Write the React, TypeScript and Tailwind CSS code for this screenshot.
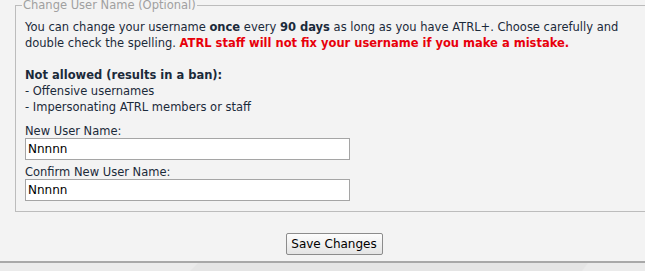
import React from 'react';

const App: React.FC = () => {
  return (
    <div className="w-[645px] h-[271px] overflow-hidden bg-[#f3f3f3] font-['DejaVu_Sans',sans-serif] text-[11.5px] text-[#1b2a3a]">
      <div className="w-[668px] h-full flex flex-col">
        {/* Настройки имени */}
        <div className="pl-[15px] h-[213px] -mt-[3px]">
          <fieldset className="border border-[#bcbcbc] w-[680px] pl-[9px] pb-[10px]">
            <legend className="-ml-[3px] px-[1px] leading-[16px] text-[#a0a0a0]">Change User Name (Optional)</legend>
            <p className="mt-[6px] w-[600px] leading-[16px]">
              You can change your username <b>once</b> every <b>90 days</b> as long as you have ATRL+. Choose carefully and double check the spelling.{' '}
              <b className="text-[#e8000b]">ATRL staff will not fix your username if you make a mistake.</b>
            </p>
            <div className="mt-[16px] leading-[16px]">
              <b>Not allowed (results in a ban):</b>
              <div>- Offensive usernames</div>
              <div>- Impersonating ATRL members or staff</div>
            </div>
            <label className="block mt-[9px] leading-[14px]">New User Name:</label>
            <input
              defaultValue="Nnnnn"
              className="block w-[325px] h-[22px] bg-white border border-[#a5a5a5] px-[2px] text-[12px] text-black outline-none"
            />
            <label className="block mt-[5px] leading-[14px]">Confirm New User Name:</label>
            <input
              defaultValue="Nnnnn"
              className="block w-[325px] h-[22px] bg-white border border-[#a5a5a5] px-[2px] text-[12px] text-black outline-none"
            />
          </fieldset>
        </div>

        {/* Кнопка */}
        <div className="flex-1 flex justify-center pt-[23px]">
          <button className="h-[22px] w-[97px] rounded-[2px] border border-[#8c8c8c] bg-gradient-to-b from-[#fdfdfd] to-[#e4e4e4] text-[12px] text-black leading-[20px]">
            Save Changes
          </button>
        </div>

        <div className="h-[2px] bg-[#a8a8a8]" />
        <div className="h-[8px] bg-[#ebebeb] relative">
          <svg className="absolute left-0 top-0" width="645" height="8">
            <polygon points="190,8 198,0 588,0 582,8" fill="#e5e5e5" />
          </svg>
        </div>
      </div>
    </div>
  );
};

export default App;
